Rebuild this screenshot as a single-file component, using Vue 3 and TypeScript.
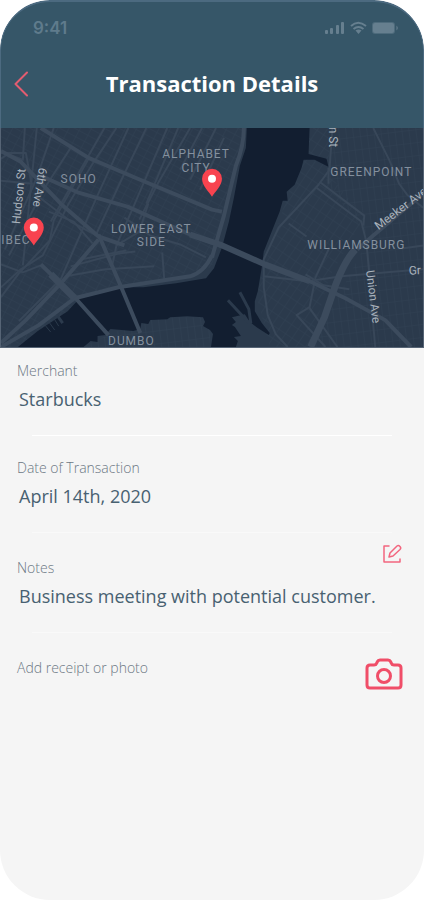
<script setup lang="ts">
import { ref } from 'vue'

interface MapLabel {
  text: string
  x: number
  y: number
  rotate?: number
  street?: boolean
}

interface Pin {
  name: string
  x: number
  y: number
}

const merchant = ref('Starbucks')
const date = ref('April 14th, 2020')
const notes = ref('Business meeting with potential customer.')

const labels: MapLabel[] = [
  { text: 'SOHO', x: 78, y: 55 },
  { text: 'ALPHABET', x: 196, y: 30 },
  { text: 'CITY', x: 196, y: 44 },
  { text: 'LOWER EAST', x: 151, y: 105 },
  { text: 'SIDE', x: 151, y: 119 },
  { text: 'IBEC', x: 15, y: 117 },
  { text: 'DUMBO', x: 131, y: 218 },
  { text: 'GREENPOINT', x: 372, y: 48 },
  { text: 'WILLIAMSBURG', x: 357, y: 122 },
  { text: 'Hudson St', x: 22, y: 69, rotate: -84, street: true },
  { text: '6th Ave', x: 35, y: 59, rotate: 99, street: true },
  { text: 'n St', x: 330, y: 9, rotate: 90, street: true },
  { text: 'Meeker Ave', x: 404, y: 84, rotate: -37, street: true },
  { text: 'Union Ave', x: 370, y: 170, rotate: 83, street: true },
  { text: 'Gr', x: 416, y: 147, rotate: -3, street: true },
]

const pins: Pin[] = [
  { name: 'Tribeca', x: 33, y: 118 },
  { name: 'Alphabet City', x: 212, y: 69 },
]

const avenues: string[] = [
  'M40 0L88 30L135 50L212 82L222 84',
  'M0 23L20 34L60 76L98 109L124 118',
  'M40 48L78 65L127 79L190 107L222 119',
  'M98 107L120 158L140 206',
  'M40 137L74 170L108 208',
  'M98 112L62 154L25 193L0 216',
  'M0 220L38 198L74 171L118 160L190 149Q204 145 212 128',
  'M244 0Q244 18 236 38L224 88L212 130',
]

const streets: string[] = [
  'M128 0L96 70L60 152L18 194',
  'M167 0L134 77L116 118L112 137',
  'M178 0L146 76',
  'M190 0L158 55L139 92',
  'M202 0L180 42',
  'M216 0L190 52',
  'M224 10L200 62',
  'M116 0L92 36L68 76L42 128L20 142L0 160',
  'M88 31L53 93L49 113L18 146L0 170',
  'M146 0L122 50L96 106',
  'M104 0L62 73L50 94',
  'M70 20L44 60L8 128',
  'M53 0L36 50L4 122',
  'M36 0L30 60L22 138',
  'M24 0L22 32L7 26L0 31',
  'M0 25L25 25L31 58',
  'M0 53L32 56',
  'M0 137L22 145L40 138',
  'M34 66L70 94L98 109',
  'M48 84L73 94L92 116',
  'M65 149L105 142L154 139',
  'M70 139L118 126L135 124',
  'M80 132L126 123',
  'M124 90L150 108L180 117L206 130',
  'M162 125L164 152',
  'M148 76L139 104L116 118',
]

const brooklynStreets: string[] = [
  'M333 0L330 42L319 57L279 100L264 132L264 160L268 188L276 207L288 220',
  'M320 54L365 88L364 98',
  'M317 60L362 94L367 114L370 146L374 198L376 220',
  'M329 40L329 56',
  'M374 0L390 32L400 56L408 67L424 80',
  'M289 96L307 109',
  'M264 149L308 154L342 149L388 145L424 142',
  'M330 120L316 150L310 180L297 188L326 220',
  'M310 181L338 220',
  'M403 121L424 118',
  'M306 147L324 158L350 162',
]
</script>

<template>
  <main class="screen">
    <header class="header">
      <div class="status">
        <span class="time">9:41</span>
        <svg class="status-icons" viewBox="0 0 76 14" aria-hidden="true">
          <rect x="1" y="9" width="3" height="4" rx="1" />
          <rect x="6" y="7" width="3" height="6" rx="1" />
          <rect x="12" y="4" width="3" height="9" rx="1" />
          <rect x="17" y="1" width="3" height="12" rx="1" />
          <path d="M27 5Q34 -1.500 42 5" class="arc" />
          <path d="M29.500 8Q34.500 4 39.500 8" class="arc" />
          <path d="M31.500 9.500Q34.500 7.500 37.500 9.500L34.500 13Z" />
          <rect x="48" y="1" width="23" height="12" rx="3" class="faint" />
          <rect x="49" y="2" width="21" height="10" rx="2" />
          <path d="M72.500 4.500Q75 7 72.500 9.500Z" />
        </svg>
      </div>
      <div class="bar">
        <button class="icon-button back" type="button" aria-label="Back">
          <svg viewBox="0 0 14 26" width="14" height="26" aria-hidden="true">
            <path d="M13 1.500L1.500 13L13 24.500" />
          </svg>
        </button>
        <h1>Transaction Details</h1>
      </div>
    </header>

    <svg class="map" viewBox="0 0 424 220" preserveAspectRatio="xMidYMid slice" role="img" aria-label="Map">
      <defs>
        <pattern id="blocks-west" width="10" height="7" patternUnits="userSpaceOnUse" patternTransform="rotate(28)">
          <path d="M0 0H10M0 0V7" class="block-line" />
        </pattern>
        <pattern id="blocks-east" width="8" height="11" patternUnits="userSpaceOnUse" patternTransform="rotate(34)">
          <path d="M0 0H8M0 0V11" class="block-line" />
        </pattern>
        <pattern id="blocks-straight" width="7" height="13" patternUnits="userSpaceOnUse" patternTransform="rotate(-7)">
          <path d="M0 0H7M0 0V13" class="block-line" />
        </pattern>
      </defs>
      <rect width="424" height="220" class="land" />
      <path d="M0 0H246L212 140L120 160L20 220H0Z" fill="url(#blocks-west)" />
      <path d="M310 0H332L328 45L365 90L330 150L310 220H270L256 165Z" fill="url(#blocks-east)" />
      <path d="M334 0H424V220H312L370 110L326 55Z" fill="url(#blocks-straight)" />
      <path d="M80 220L150 190H210V220Z" fill="url(#blocks-straight)" />
      <path
        class="water"
        d="M247 0L246 20L240 38L234 70L229 94L222 120L214 141L206 151L176 156L143 160L120 160L98 163L80 170L67 184L37 204L17 220H83L90 214L97 215L97 209L105 208L110 202L133 204L140 202L141 196L148 197L150 193L167 192L170 190L187 189L203 190L205 195L203 199L210 203L213 207L211 220H236L238 214L234 210L241 209L235 200L232 198L236 195L232 190L245 187L250 195L258 201L269 208L270 206L262 196L255 184L255 174L258 164L262 140L264 124L272 104L280 84L283 73L288 73L287 64L295 57L302 40L304 32L315 32L329 39L327 31L309 26L310 0Z"
      />
      <path class="pier" d="M228 173L252 199M240 165L249 182L251 196M57 189L62 196" />
      <path class="pier thin" d="M53 191L58 199M49 196L54 203M45 199L50 205" />
      <path v-for="d in streets" :key="d" :d="d" class="street" />
      <path v-for="d in brooklynStreets" :key="d" :d="d" class="street" />
      <path v-for="d in avenues" :key="d" :d="d" class="avenue" />
      <path class="bridge" d="M190 107L220 117L265 137L310 154" />
      <path class="avenue" d="M306 152L346 171L386 193L412 220" />
      <path class="avenue" d="M424 66L374 108L358 122" />
      <path class="highway" d="M356 122Q346 132 336 158L325 190L311 220" />
      <path class="highway" d="M50 147L74 171" />
      <text
        v-for="label in labels"
        :key="label.text"
        :class="label.street ? 'street-name' : 'district'"
        :transform="`translate(${label.x} ${label.y}) rotate(${label.rotate ?? 0})`"
      >{{ label.text }}</text>
      <g v-for="pin in pins" :key="pin.name" :transform="`translate(${pin.x} ${pin.y})`">
        <path class="pin" d="M0 0C-3 -5 -10 -11 -10 -18A10 10 0 0 1 10 -18C10 -11 3 -5 0 0Z" />
        <circle cy="-18" r="4" fill="#fff" />
      </g>
    </svg>

    <dl class="details">
      <div class="row first">
        <dt>Merchant</dt>
        <dd>{{ merchant }}</dd>
      </div>
      <div class="row">
        <dt>Date of Transaction</dt>
        <dd>{{ date }}</dd>
      </div>
      <div class="row notes">
        <dt>
          <span>Notes</span>
          <button class="icon-button" type="button" aria-label="Edit notes">
            <svg class="edit" viewBox="0 0 20 20" width="20" height="20" aria-hidden="true">
              <path d="M7 2H2V18H18V15" />
              <path d="M7 13L8 9L15 2Q16.500 1 18 2.500T18 5.500L11 12Z" />
            </svg>
          </button>
        </dt>
        <dd>{{ notes }}</dd>
      </div>
    </dl>
    <div class="receipt">
      <span id="receipt-label">Add receipt or photo</span>
      <button class="icon-button" type="button" aria-labelledby="receipt-label">
        <svg class="camera" viewBox="0 0 38 32" width="38" height="32" aria-hidden="true">
          <path d="M5 7H9Q11 7 11.500 5.500L12.500 3.500Q13 2 15 2H23Q25 2 25.500 3.500L26.500 5.500Q27 7 29 7H33Q36 7 36 10V27Q36 30 33 30H5Q2 30 2 27V10Q2 7 5 7Z" />
          <circle cx="19" cy="18" r="6.500" />
        </svg>
      </button>
    </div>
  </main>
</template>

<style>
body {
  margin: 0;
  background: #fff;
}
</style>

<style scoped>
.screen {
  display: flex;
  flex-direction: column;
  box-sizing: border-box;
  min-height: 100vh;
  overflow: hidden;
  border-radius: 50px;
  background: #f5f5f5;
  font-family: "Open Sans", "Noto Sans", sans-serif;
}

.header {
  box-sizing: border-box;
  border: 1px solid #4c6a80;
  border-top-width: 2px;
  border-bottom: 0;
  border-radius: 50px 50px 0 0;
  background: #365668;
  color: #fff;
}

.status {
  display: flex;
  align-items: center;
  justify-content: space-between;
  height: 22px;
  padding: 15px 23px 0 32px;
}

.time {
  color: #5f7b8c;
  font: 600 17px/22px Inter, sans-serif;
}

.status-icons {
  width: 76px;
  height: 14px;
  fill: #667f8f;
}

.status-icons .arc {
  fill: none;
  stroke: #667f8f;
  stroke-width: 2;
}

.status-icons .faint {
  opacity: 0.5;
}

.bar {
  display: grid;
  grid-template-columns: 1fr auto 1fr;
  align-items: center;
  height: 89px;
  padding: 0 13px;
}

h1 {
  margin: 0 0 2px;
  font-size: 22px;
  font-weight: 700;
  line-height: 30px;
}

.icon-button {
  display: flex;
  padding: 0;
  border: 0;
  background: none;
  cursor: pointer;
}

.icon-button svg {
  fill: none;
  stroke: #f04e68;
  stroke-linecap: round;
  stroke-linejoin: round;
}

.icon-button.back {
  justify-self: start;
}

.icon-button.back svg {
  stroke: #e25c70;
  stroke-width: 2;
}

.map {
  display: block;
  box-sizing: border-box;
  width: 100%;
  height: 220px;
  border: 1px solid #566475;
  border-top: 0;
}

.land {
  fill: #2b3a4c;
}

.block-line {
  fill: none;
  stroke: #314153;
  stroke-width: 1;
}

.water {
  fill: #121e30;
}

.pier,
.street,
.avenue,
.bridge,
.highway {
  fill: none;
  stroke: #3c4b5d;
  stroke-linejoin: round;
}

.pier {
  stroke: #2b3a4c;
  stroke-width: 3;
}

.pier.thin {
  stroke-width: 1;
}

.street {
  stroke: #384759;
  stroke-width: 2;
}

.avenue {
  stroke-width: 4;
}

.bridge {
  stroke-width: 6;
}

.highway {
  stroke-width: 7;
}

.district,
.street-name {
  font-family: Roboto, sans-serif;
  font-size: 12px;
  text-anchor: middle;
}

.district {
  fill: #84909e;
  letter-spacing: 1px;
}

.street-name {
  fill: #a9b2bc;
}

.pin {
  fill: #f8434f;
}

.details {
  margin: 0;
}

.row {
  position: relative;
  padding: 22px 17px 25px;
}

.row::after {
  content: "";
  display: block;
  position: absolute;
  right: 32px;
  bottom: 0;
  left: 32px;
  height: 1px;
  background: #f9f9f9;
}

.first {
  padding-top: 13px;
}

.first::after {
  background: #fff;
}

.notes {
  padding-top: 11px;
}

dt,
.receipt {
  color: #6c7884;
  font-size: 14px;
  font-weight: 300;
  line-height: 20px;
}

dd {
  margin: 6px 0 0 2px;
  color: #486171;
  font-size: 18px;
  line-height: 24px;
}

.notes dt {
  display: flex;
  align-items: flex-end;
  justify-content: space-between;
  height: 34px;
  padding-right: 5px;
}

.notes .icon-button {
  align-self: flex-start;
}

.icon-button .edit {
  stroke: #f2667f;
  stroke-width: 1.5;
}

.receipt {
  display: flex;
  align-items: flex-start;
  justify-content: space-between;
  padding: 25px 21px 24px 17px;
}

.icon-button .camera {
  stroke-width: 3;
}
</style>
